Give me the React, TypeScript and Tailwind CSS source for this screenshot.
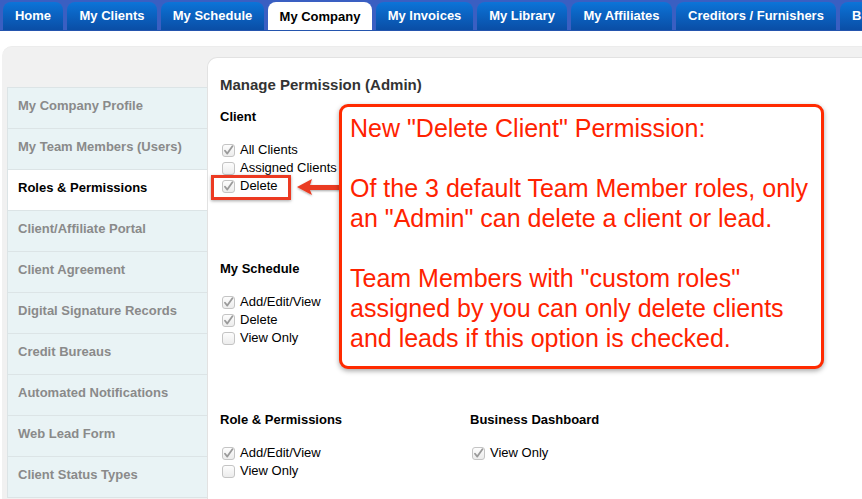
import React from "react";

const TABS = [
  { label: "Home", w: "w-[60px]" },
  { label: "My Clients", w: "w-[90px]" },
  { label: "My Schedule", w: "w-[103px]" },
  { label: "My Company", w: "w-[104px]", active: true },
  { label: "My Invoices", w: "w-[97px]" },
  { label: "My Library", w: "w-[90px]" },
  { label: "My Affiliates", w: "w-[101px]" },
  { label: "Creditors / Furnishers", w: "w-[160px]" },
  { label: "Business Dashboard", w: "w-[150px]" },
];

const MENU = [
  "My Company Profile",
  "My Team Members (Users)",
  "Roles & Permissions",
  "Client/Affiliate Portal",
  "Client Agreement",
  "Digital Signature Records",
  "Credit Bureaus",
  "Automated Notifications",
  "Web Lead Form",
  "Client Status Types",
];

function Check({ checked, label }: { checked?: boolean; label: string }) {
  return (
    <div className="flex items-center h-[18px] text-[13px] text-black">
      <span className="ml-[2px] w-[13px] h-[13px] rounded-[3px] border border-[#c4c4c4] bg-gradient-to-b from-[#fdfdfd] to-[#ececec] flex items-center justify-center shrink-0">
        {checked && (
          <svg width="11" height="11" viewBox="0 0 11 11">
            <path d="M2 5.8 L4.3 8.6 L9.4 1.2" fill="none" stroke="#9a9a9a" strokeWidth="1.8" strokeLinecap="round" strokeLinejoin="round" />
          </svg>
        )}
      </span>
      <span className="ml-[5px]">{label}</span>
    </div>
  );
}

function Section({ title, items, className = "" }: { title: string; items: [string, boolean][]; className?: string }) {
  return (
    <div className={className}>
      <div className="font-bold text-[13px] leading-[18px] text-black">{title}</div>
      <div className="mt-[15px]">
        {items.map(([l, c]) => (
          <Check key={l} label={l} checked={c} />
        ))}
      </div>
    </div>
  );
}

export default function App() {
  return (
    <div className="relative w-[862px] h-[499px] overflow-hidden bg-white" style={{ fontFamily: '"Liberation Sans", Arial, sans-serif' }}>
      {/* Tab bar */}
      <div className="h-[31px] bg-[#3a5fc2] border-b border-[#2455ae] flex items-end gap-[4px] pl-[3px] overflow-hidden">
        {TABS.map((t) =>
          t.active ? (
            <div key={t.label} className={`${t.w} shrink-0 h-[29px] -mb-px rounded-t-[8px] bg-white text-black font-bold text-[13px] flex items-center justify-center`}>
              {t.label}
            </div>
          ) : (
            <div
              key={t.label}
              className={`${t.w} shrink-0 h-[28px] rounded-t-[8px] bg-gradient-to-b from-[#0c74d8] to-[#0a4ea6] text-white font-bold text-[13px] flex items-center justify-center whitespace-nowrap ${t.label === "Business Dashboard" ? "justify-start pl-[12px]" : ""}`}
            >
              {t.label}
            </div>
          )
        )}
      </div>

      {/* Body */}
      <div className="mt-[15px] ml-[2px] bg-[#f1f1f1] rounded-tl-[10px] border-t border-[#ececec] flex h-[460px]">
        {/* Sidebar */}
        <div className="mt-[40px] ml-[5px] w-[200px] shrink-0 border-t border-l border-[#dce4e6] self-start">
          {MENU.map((m) => {
            const active = m === "Roles & Permissions";
            return (
              <div
                key={m}
                className={`h-[41px] border-b border-[#dce4e6] flex items-center pl-[10px] pb-[4px] font-bold text-[13px] ${active ? "bg-white text-black" : "bg-[#e9f3f5] text-[#8a8a8a]"}`}
              >
                {m}
              </div>
            );
          })}
        </div>

        {/* Content */}
        <div className="mt-[10px] flex-1 bg-white rounded-tl-[10px] border-t border-l border-[#e2e2e2] pl-[12px] pt-[18px]">
          <div className="font-bold text-[15px] leading-[18px] text-[#333]">Manage Permission (Admin)</div>
          <Section
            className="mt-[14px]"
            title="Client"
            items={[
              ["All Clients", true],
              ["Assigned Clients", false],
              ["Delete", true],
            ]}
          />
          <Section
            className="mt-[65px]"
            title="My Schedule"
            items={[
              ["Add/Edit/View", true],
              ["Delete", true],
              ["View Only", false],
            ]}
          />
          <div className="mt-[64px] grid grid-cols-[250px_250px]">
            <Section
              title="Role & Permissions"
              items={[
                ["Add/Edit/View", true],
                ["View Only", false],
              ]}
            />
            <Section title="Business Dashboard" items={[["View Only", true]]} />
          </div>
        </div>
      </div>

      {/* Highlight around Delete */}
      <div className="absolute left-[211px] top-[175px] w-[80px] h-[25px] border-[3px] border-[#ec3a22] shadow-[0_1px_3px_rgba(0,0,0,0.35)]" />

      {/* Arrow */}
      <svg className="absolute left-[294px] top-[176px]" width="50" height="24" viewBox="0 0 50 24">
        <defs>
          <filter id="sh" x="-20%" y="-40%" width="140%" height="180%">
            <feDropShadow dx="0" dy="1" stdDeviation="1" floodColor="#000" floodOpacity="0.35" />
          </filter>
        </defs>
        <path d="M3 11 L18 3 L16 9 L48 9 L48 14 L16 14 L18 19 Z" fill="#ea3a20" filter="url(#sh)" />
      </svg>

      {/* Callout */}
      <div className="absolute left-[339px] top-[104px] w-[485px] h-[265px] bg-white border-[3px] border-[#ff2a00] rounded-[9px] shadow-[0_2px_5px_rgba(0,0,0,0.35)] pl-[8px] pt-[6px] text-[25px] leading-[30px] text-[#ff2200] whitespace-nowrap">
        <div>New "Delete Client" Permission:</div>
        <div className="h-[30px]" />
        <div>Of the 3 default Team Member roles, only</div>
        <div>an "Admin" can delete a client or lead.</div>
        <div className="h-[30px]" />
        <div>Team Members with "custom roles"</div>
        <div>assigned by you can only delete clients</div>
        <div>and leads if this option is checked.</div>
      </div>
    </div>
  );
}
